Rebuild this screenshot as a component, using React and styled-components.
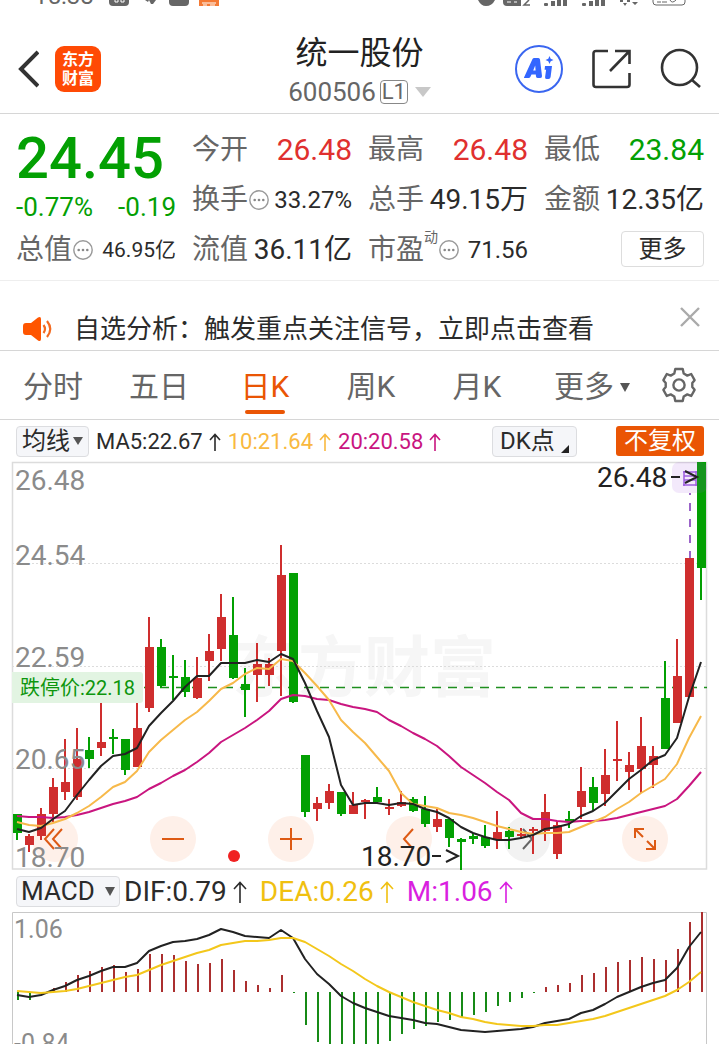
import React from "react";
import styled, { createGlobalStyle } from "styled-components";

const GlobalStyle = createGlobalStyle`
  * { box-sizing: border-box; }
  body {
    margin: 0;
    background: #fff;
    color: #2b2b2b;
    font-family: Roboto, "Noto Sans CJK SC", sans-serif;
  }
  button { font: inherit; color: inherit; background: none; border: 0; padding: 0; margin: 0; cursor: pointer; }
  svg { display: block; flex: none; }
`;

const GREEN = "#03a003";
const RED = "#e0302f";
const ORANGE = "#ea5504";

const Page = styled.div`
  height: 100vh;
  overflow: hidden;
`;

/* ---------- status bar ---------- */
const StatusBar = styled.div`
  height: 24px;
  padding: 0 33px 0 34px;
`;
const StatusClip = styled.div`
  height: 8px;
  overflow: hidden;
  display: flex;
  justify-content: space-between;
  align-items: flex-end;
  color: #666;
`;
const StatusGroup = styled.div`
  display: flex;
  align-items: flex-end;
  gap: ${(p) => p.$gap}px;
  svg { margin-bottom: 2px; }
`;
const Clock = styled.span`
  font-size: 24px;
  line-height: 24px;
  margin-right: 5px;
`;

/* ---------- header ---------- */
const Header = styled.header`
  display: grid;
  grid-template-columns: 1fr auto 1fr;
  align-items: center;
  height: 90px;
  padding: 0 18px 0 18px;
  border-bottom: 1px solid #d6d6d6;
`;
const HeaderSide = styled.div`
  display: flex;
  align-items: center;
  justify-content: ${(p) => (p.$end ? "flex-end" : "flex-start")};
  gap: ${(p) => (p.$end ? 29 : 16)}px;
`;
const IconButton = styled.button`
  display: flex;
  align-items: center;
  justify-content: center;
`;
const BrandLogo = styled.div`
  width: 46px;
  height: 46px;
  border-radius: 9px;
  background: #ff4a05;
  color: #fff;
  font-size: 16px;
  font-weight: 700;
  line-height: 19px;
  padding-top: 4px;
  text-align: center;
`;
const TitleBlock = styled.div`
  display: flex;
  flex-direction: column;
  align-items: center;
  padding-top: 4px;
`;
const Title = styled.h1`
  margin: 0;
  font-size: 32px;
  font-weight: 400;
  line-height: 42px;
  color: #222;
`;
const CodeLine = styled.button`
  display: flex;
  align-items: center;
  font-size: 26px;
  line-height: 36px;
  color: #666;
`;
const LevelTag = styled.span`
  border: 1px solid #888;
  border-radius: 4px;
  width: 28px;
  font-size: 22px;
  line-height: 22px;
  text-align: center;
  margin: 0 7px 0 4px;
`;
const Caret = styled.span`
  border-left: ${(p) => p.$w}px solid transparent;
  border-right: ${(p) => p.$w}px solid transparent;
  border-top: ${(p) => p.$h}px solid ${(p) => p.$c || "#555"};
`;

/* ---------- quote panel ---------- */
const Quote = styled.section`
  display: grid;
  grid-template-columns: repeat(4, 1fr);
  grid-template-rows: 50px 50px 50px;
  column-gap: 16px;
  padding: 10px 15px 6px 16px;
  border-bottom: 1px solid #eee;
`;
const PriceBlock = styled.div`
  grid-row: span 2;
  color: ${GREEN};
`;
const Price = styled.div`
  font-size: 58px;
  font-weight: 500;
  line-height: 64px;
  padding-top: 2px;
`;
const Change = styled.div`
  display: flex;
  justify-content: space-between;
  font-size: 26px;
  line-height: 34px;
`;
const Cell = styled.div`
  display: flex;
  align-items: center;
  justify-content: space-between;
  white-space: nowrap;
  padding-top: 2px;
`;
const CellLabel = styled.span`
  display: flex;
  align-items: center;
  font-size: 28px;
  line-height: 40px;
  color: #666;
`;
const CellValue = styled.span`
  font-size: ${(p) => p.$size || 28}px;
  line-height: 40px;
  color: ${(p) => p.$color || "#2b2b2b"};
`;
const Sup = styled.sup`
  font-size: 14px;
  line-height: 14px;
  align-self: flex-start;
`;
const MoreButton = styled.button`
  justify-self: end;
  align-self: center;
  width: 83px;
  height: 36px;
  border: 1px solid #ddd;
  border-radius: 4px;
  font-size: 24px;
  line-height: 32px;
`;

/* ---------- notice ---------- */
const Notice = styled.section`
  display: flex;
  align-items: center;
  height: 70px;
  padding: 26px 19px 0 22px;
  border-bottom: 1px solid #d6d6d6;
`;
const NoticeText = styled.p`
  flex: 1;
  margin: 0 0 0 20px;
  font-size: 26px;
  line-height: 40px;
  white-space: nowrap;
`;
const CloseButton = styled(IconButton)`
  align-self: flex-start;
`;

/* ---------- tabs ---------- */
const Tabs = styled.nav`
  display: grid;
  grid-template-columns: repeat(5, 106fr) 124fr 50fr;
  height: 69px;
  padding-right: 15px;
  border-bottom: 1px solid #d6d6d6;
`;
const Tab = styled.button`
  position: relative;
  display: flex;
  align-items: center;
  justify-content: center;
  gap: 6px;
  padding-top: 4px;
  font-size: 30px;
  line-height: 40px;
  color: ${(p) => (p.$active ? ORANGE : "#666")};
  &::after {
    content: "";
    display: ${(p) => (p.$active ? "block" : "none")};
    position: absolute;
    left: calc(50% - 20px);
    bottom: 5px;
    width: 40px;
    height: 4px;
    border-radius: 2px;
    background: ${ORANGE};
  }
`;

/* ---------- indicator rows ---------- */
const IndicatorRow = styled.div`
  display: flex;
  align-items: center;
  height: 42px;
  padding: 0 15px 0 16px;
`;
const Chip = styled.button`
  position: relative;
  display: flex;
  align-items: center;
  justify-content: space-between;
  width: ${(p) => p.$w}px;
  height: 31px;
  padding: 0 ${(p) => p.$pad || 5}px;
  border: 1px solid #dcdde0;
  border-radius: 4px;
  background: #f5f6f9;
  font-size: ${(p) => p.$size || 24}px;
  line-height: 28px;
  margin-right: ${(p) => p.$mr}px;
`;
const AdjustButton = styled.button`
  width: 88px;
  height: 30px;
  border-radius: 3px;
  background: ${ORANGE};
  color: #fff;
  font-size: 24px;
  line-height: 28px;
`;
const Corner = styled.span`
  border-left: 8px solid transparent;
  border-bottom: 8px solid #222;
  align-self: flex-end;
  margin-bottom: 3px;
`;
const Readings = styled.div`
  flex: 1;
  display: flex;
  align-items: center;
  gap: ${(p) => p.$gap}px;
  padding-top: 2px;
`;
const Reading = styled.span`
  display: flex;
  align-items: center;
  gap: 6px;
  font-size: ${(p) => p.$size}px;
  line-height: 30px;
  color: ${(p) => p.$color};
`;

/* ---------- charts ---------- */
const ChartBox = styled.section`
  position: relative;
  padding: 0 12px;
  svg.plot {
    position: relative;
    z-index: 1;
    width: 100%;
    height: auto;
    overflow: visible;
    pointer-events: none;
  }
`;
const ChartTools = styled.div`
  position: absolute;
  left: 32px;
  right: 51px;
  bottom: 8px;
  display: flex;
  justify-content: space-between;
`;
const ToolButton = styled.button`
  display: flex;
  align-items: center;
  justify-content: center;
  width: 46px;
  height: 46px;
  border-radius: 50%;
  color: ${(p) => (p.$muted ? "#666" : "#dd5a14")};
  background: ${(p) => (p.$muted ? "#f2f2f2" : "#fef0e9")};
`;

/* direction, wick top, body top, body bottom, wick bottom */
const CANDLES = [
  ["g",814,814,833,840],["r",834,836,845,852],["r",808,814,836,840],["r",778,787,814,822],
  ["r",739,782,792,800],["r",728,759,797,800],["g",737,750,759,768],["r",697,742,748,756],
  ["g",729,737,739,754],["g",739,739,770,775],["r",698,728,767,767],["r",617,647,708,712],
  ["g",639,647,686,688],["g",655,676,678,700],["g",660,677,692,697],["r",657,678,698,699],
  ["r",634,651,661,681],["r",594,617,649,661],["g",597,635,678,679],["g",668,684,690,717],
  ["r",643,664,675,702],["r",658,664,675,686],["r",545,575,651,696],["g",573,573,702,703],
  ["g",755,755,812,817],["r",797,803,809,821],["r",784,791,803,809],["g",792,792,814,816],
  ["r",792,805,814,814],["r",799,800,802,819],["g",787,797,802,804],["r",799,807,809,815],
  ["r",791,802,806,807],["g",797,799,811,812],["g",796,809,824,827],["r",809,819,827,832],
  ["g",819,819,838,847],["g",838,839,842,870],["g",833,836,839,844],["g",825,837,846,848],
  ["r",811,832,839,849],["g",827,831,837,849],["r",828,834,836,839],["r",827,829,831,854],
  ["r",794,812,831,841],["r",822,825,854,859],["g",811,819,821,828],["r",767,791,807,819],
  ["g",777,787,803,811],["r",749,775,794,806],["r",721,759,761,781],["r",752,765,772,790],
  ["r",717,746,769,793],["r",746,756,765,788],["g",661,698,749,749],["r",639,676,723,723],
  ["r",558,558,697,697],["g",462,462,568,600],
];
const MA5 = [829,832,828,819,811,795,780,766,756,754,748,726,713,701,687,676,676,663,663,663,660,662,654,659,683,711,737,785,805,803,803,805,803,804,809,812,818,827,833,837,840,840,838,835,829,827,824,816,811,803,791,779,770,760,755,738,697,662];
const MA10 = [822,825,826,823,819,813,806,797,787,782,771,752,740,730,720,712,701,689,683,674,668,669,659,661,673,686,700,720,732,743,757,771,793,804,806,808,813,815,818,822,826,829,832,834,833,833,832,827,822,817,809,802,793,786,779,764,738,716];
const MA20 = [816,817,817,818,817,815,812,808,804,801,797,789,783,776,770,762,753,742,735,728,720,711,699,695,696,699,700,704,707,709,712,720,726,733,739,746,756,767,775,783,792,800,813,819,819,821,822,821,821,820,818,815,812,809,806,799,786,772];
const MACD = [1000,1000,995,988,982,975,971,967,965,972,969,954,954,955,961,964,963,959,970,981,985,988,975,993,1025,1042,1050,1054,1055,1052,1047,1041,1034,1029,1026,1022,1020,1018,1015,1012,1006,1002,998,993,987,985,983,975,973,967,962,960,957,959,960,949,922,912];
const DIF = [995,997,995,990,986,980,976,971,967,967,963,951,946,942,941,939,935,929,932,936,937,938,930,938,959,974,984,996,1003,1008,1012,1016,1018,1020,1023,1024,1027,1030,1031,1032,1031,1030,1029,1027,1023,1021,1019,1013,1010,1004,997,992,987,983,980,968,947,932];
const DEA = [991,992,993,992,991,989,986,983,980,977,975,970,965,961,957,953,950,945,943,941,941,940,938,938,942,949,956,964,971,979,986,992,997,1002,1006,1010,1013,1017,1019,1022,1024,1025,1026,1026,1025,1025,1023,1021,1019,1016,1012,1008,1004,1000,996,990,982,972];

const xAt = (i) => 17 + 12 * i;
const toPoints = (ys) => ys.map((y, i) => `${xAt(i)},${y}`).join(" ");

const Line = ({ ys, color }) => (
  <polyline points={toPoints(ys)} fill="none" stroke={color} strokeWidth="2" strokeLinejoin="round" />
);

const Candle = ({ i, data: [kind, hi, top, bottom, lo] }) => {
  const fill = kind === "g" ? "#03a003" : "#cf2e2e";
  const x = xAt(i);
  return (
    <g fill={fill}>
      <rect x={x - 1} y={hi} width="2" height={lo - hi} />
      <rect x={x - 4} y={top} width="9" height={Math.max(2, bottom - top)} />
    </g>
  );
};

const UpArrow = ({ w = 12, h = 18 }) => (
  <svg width={w} height={h} viewBox={`0 0 ${w} ${h}`} fill="none" stroke="currentColor" strokeWidth="1.6" role="img" aria-label="上升">
    <path d={`M${w / 2} ${h}V1M1 ${w / 2 + 1}L${w / 2} 1.5L${w - 1} ${w / 2 + 1}`} />
  </svg>
);

const InfoDots = () => (
  <svg width="22" height="20" viewBox="0 0 22 20" aria-hidden="true">
    <circle cx="11" cy="10" r="9.200" fill="none" stroke="#999" strokeWidth="1.400" />
    <g fill="#888">
      <circle cx="6.700" cy="10" r="1.300" />
      <circle cx="11" cy="10" r="1.300" />
      <circle cx="15.300" cy="10" r="1.300" />
    </g>
  </svg>
);

const Gear = () => (
  <svg width="36" height="36" viewBox="0 0 36 36" fill="none" stroke="#666" strokeWidth="2.4" strokeLinejoin="round">
    <path d="M14.300 2H21.700L22.700 6.500L26.300 8.600L30.200 7L33.600 13.200L31.300 16V20L33.600 22.800L30.200 29L26.300 27.400L22.700 29.500L21.700 34H14.300L13.300 29.500L9.700 27.400L5.800 29L2.400 22.800L4.700 20V16L2.400 13.200L5.800 7L9.700 8.600L13.300 6.500Z" />
    <circle cx="18" cy="18" r="5.600" />
  </svg>
);

const Signal = () => (
  <svg width="24" height="6" fill="#666">
    <rect x="0" y="3" width="4" height="3" rx="1" />
    <rect x="7" y="1" width="4" height="5" />
    <rect x="13" y="0" width="4" height="6" />
    <rect x="19" y="0" width="4" height="6" />
  </svg>
);

const Stat = ({ label, value, size, color, info, sup }) => (
  <Cell>
    <CellLabel>
      {label}
      {sup && <Sup>{sup}</Sup>}
      {info && <InfoDots />}
    </CellLabel>
    <CellValue $size={size} $color={color}>{value}</CellValue>
  </Cell>
);

const TOOLS = [
  ["最早", <path key="p" d="M13 4L4 14L13 24M21 4L12 14L21 24" />],
  ["缩小", <path key="p" d="M3 14H25" />],
  ["放大", <path key="p" d="M3 14H25M14 3V25" />],
  ["左移", <path key="p" d="M18 4L9 14L18 24" />],
  ["右移", <path key="p" d="M10 4L19 14L10 24" />],
  ["全屏", <path key="p" d="M4 13V4H13M4 4L12 12M24 15V24H15M24 24L16 16" />],
];

export default function App() {
  return (
    <Page>
      <GlobalStyle />
      <StatusBar>
        <StatusClip>
          <StatusGroup $gap={10}>
            <Clock>15:38</Clock>
            <svg width="20" height="6"><path d="M0 0H20V2Q20 6 16 6H4Q0 6 0 2Z" fill="#666" /><path d="M6 0V2H9V0M12 0V2H15V0" stroke="#fff" fill="none" /></svg>
            <svg width="20" height="6" fill="#666"><path d="M6 0H10L9 2ZM10 0H17L14 4H12Z" /></svg>
            <svg width="20" height="6"><path d="M0 0H20V2Q20 6 16 6H4Q0 6 0 2Z" fill="#666" /></svg>
            <svg width="20" height="6"><rect width="20" height="6" fill="#f47a35" /><path d="M3 3H17M4 5H8M11 5H16" stroke="#fff" fill="none" /></svg>
          </StatusGroup>
          <StatusGroup $gap={14}>
            <svg width="52" height="6" fill="#666"><path d="M0 0H17Q14 6 8 6Q3 6 0 0ZM25 0H43V6H29Q25 6 25 2Z" /><path d="M29 2H33M36 2H39" stroke="#fff" /><path d="M51 0L46 5H52" stroke="#666" strokeWidth="1.500" fill="none" /></svg>
            <Signal />
            <Signal />
            <svg width="18" height="6" fill="#666"><path d="M0 0H3V2H0ZM7 0H10V2H7ZM3 3H7L5 6ZM12 2H18L15 5Z" /></svg>
            <svg width="34" height="6" fill="none" stroke="#666"><path d="M1 0V2Q1 5 4 5H30Q33 5 33 2V0M5 2H9M10 2H15M18 0Q20 4 24 0" /></svg>
          </StatusGroup>
        </StatusClip>
      </StatusBar>

      <Header>
        <HeaderSide>
          <IconButton aria-label="返回">
            <svg width="21" height="38" viewBox="0 0 21 38" fill="none" stroke="#333" strokeWidth="4"><path d="M20 2L3 19L20 36" /></svg>
          </IconButton>
          <BrandLogo>东方<br />财富</BrandLogo>
        </HeaderSide>
        <TitleBlock>
          <Title>统一股份</Title>
          <CodeLine>
            600506<LevelTag>L1</LevelTag><Caret $w={8} $h={10} $c="#c8c8c8" />
          </CodeLine>
        </TitleBlock>
        <HeaderSide $end>
          <IconButton aria-label="Ai">
            <svg width="48" height="48" viewBox="0 0 48 48">
              <circle cx="24" cy="24" r="23" fill="none" stroke="#3a66f0" strokeWidth="2" />
              <path fill="#3366ff" fillRule="evenodd" d="M9 32.500L17.500 14Q18 13 19.300 13H23.400Q24.800 13 25 14.500L27 31Q27.200 33 25.200 33H23Q21.200 33 21 31.400L20.800 29.500H16.500L15.300 32Q14.800 33 13.600 33H10Q8.600 33 9 32.500ZM18.200 25.500H20.600L20.200 20.500Z" />
              <path fill="#3366ff" d="M30 21H37L35.600 32Q35.300 34 33.500 34H31.500Q29.800 34 30.100 32L31.100 24.800H29.600ZM34.500 11L35.700 13.800L38.500 15L35.700 16.200L34.500 19L33.300 16.200L30.500 15L33.300 13.800Z" />
            </svg>
          </IconButton>
          <IconButton aria-label="分享">
            <svg width="39" height="40" viewBox="0 0 39 40" fill="none" stroke="#333" strokeWidth="2.600">
              <path d="M16 2H4Q1.500 2 1.500 4.500V35.500Q1.500 38 4 38H35Q37.500 38 37.500 35.500V24M23 2H37.500V15M37 2.500L18 22" />
            </svg>
          </IconButton>
          <IconButton aria-label="搜索">
            <svg width="41" height="41" viewBox="0 0 41 41" fill="none" stroke="#333" strokeWidth="2.600">
              <circle cx="19.500" cy="19.500" r="17.500" /><path d="M32 32L40 39" />
            </svg>
          </IconButton>
        </HeaderSide>
      </Header>

      <Quote>
        <PriceBlock>
          <Price>24.45</Price>
          <Change><span>-0.77%</span><span>-0.19</span></Change>
        </PriceBlock>
        <Stat label="今开" value="26.48" size={30} color={RED} />
        <Stat label="最高" value="26.48" size={30} color={RED} />
        <Stat label="最低" value="23.84" size={30} color={GREEN} />
        <Stat label="换手" value="33.27%" size={24} info />
        <Stat label="总手" value="49.15万" />
        <Stat label="金额" value="12.35亿" />
        <Stat label="总值" value="46.95亿" size={21} info />
        <Stat label="流值" value="36.11亿" />
        <Stat label="市盈" value="71.56" size={24} sup="动" info />
        <MoreButton>更多</MoreButton>
      </Quote>

      <Notice>
        <svg width="32" height="26" viewBox="0 0 32 26" aria-hidden="true">
          <path d="M4 7H9L16 1.500Q19 0 19 3V23Q19 26 16 24.500L9 19H4Q1 19 1 16V10Q1 7 4 7Z" fill="#ff5500" />
          <path d="M21.500 9Q24.500 13 21.500 17M25 5Q31.500 13 25 21" fill="none" stroke="#f36a20" strokeWidth="2.200" />
        </svg>
        <NoticeText>自选分析：触发重点关注信号，立即点击查看</NoticeText>
        <CloseButton aria-label="关闭">
          <svg width="20" height="20" viewBox="0 0 20 20" stroke="#aaa" strokeWidth="2.400"><path d="M1 1L19 19M19 1L1 19" /></svg>
        </CloseButton>
      </Notice>

      <Tabs>
        <Tab>分时</Tab>
        <Tab>五日</Tab>
        <Tab $active aria-current="page">日K</Tab>
        <Tab>周K</Tab>
        <Tab>月K</Tab>
        <Tab>更多<Caret $w={5} $h={9} /></Tab>
        <IconButton aria-label="设置"><Gear /></IconButton>
      </Tabs>

      <IndicatorRow>
        <Chip $w={73} $mr={7}>均线<Caret $w={5} $h={8} /></Chip>
        <Readings $gap={7}>
          <Reading $size={22} $color="#2b2b2b">MA5:22.67<UpArrow /></Reading>
          <Reading $size={22} $color="#f9b93f">10:21.64<UpArrow /></Reading>
          <Reading $size={22} $color="#c9157f">20:20.58<UpArrow /></Reading>
        </Readings>
        <Chip $w={85} $pad={7} $mr={39}>DK点<Corner /></Chip>
        <AdjustButton>不复权</AdjustButton>
      </IndicatorRow>

      <ChartBox>
        <ChartTools>
          {TOOLS.map(([label, icon], i) => (
            <ToolButton key={label} aria-label={label} $muted={i === 4}>
              <svg width="28" height="28" viewBox="0 0 28 28" fill="none" stroke="currentColor" strokeWidth="2">{icon}</svg>
            </ToolButton>
          ))}
        </ChartTools>
        <svg className="plot" viewBox="12 462 695 408" role="img" aria-label="日K线图">
          <text x="232" y="691" fontSize="66" fontWeight="700" fill="#f6f6f6">东方财富</text>
          <g stroke="#dcdcdc" strokeDasharray="2 2">
            <path d="M12 563.500H707M12 666.500H707M12 768.500H707" />
          </g>
          <path d="M12.500 869V462.500H706.500V869Z" fill="none" stroke="#dcdcdc" strokeWidth="1.500" />
          <path d="M144 687.500H707" stroke="#1f8f1f" strokeWidth="1.300" strokeDasharray="9 7" />
          {CANDLES.map((c, i) => <Candle key={i} i={i} data={c} />)}
          <Line ys={MA20} color="#c9157f" />
          <Line ys={MA10} color="#f7b94a" />
          <Line ys={MA5} color="#222" />
          <path d="M12 672H140Q143 672 143 675V700Q143 703 140 703H12Z" fill="#e2f4e2" />
          <text x="20" y="695" fontSize="20" fill="#0d960d">跌停价:22.18</text>
          <g fontSize="28" fill="#8b8b8b">
            <text x="15" y="490">26.48</text>
            <text x="15" y="565">24.54</text>
            <text x="15" y="667">22.59</text>
            <text x="15" y="769">20.65</text>
            <text x="15" y="867">18.70</text>
          </g>
          <path d="M690 493V558" stroke="#9b63c9" strokeWidth="2" strokeDasharray="8 8" strokeDashoffset="6" />
          <rect x="672" y="462" width="35" height="31" rx="7" fill="#9a4be0" fillOpacity="0.12" />
          <path d="M684 471V486M696 471V486M683 472H697M684 476H696M684 480H696M683 485H697" stroke="#9d5ee0" strokeWidth="1.500" fill="none" />
          <g fontSize="28" fill="#222">
            <text x="597" y="487">26.48</text>
            <text x="361" y="866">18.70</text>
          </g>
          <g fill="none" stroke="#222" strokeWidth="2">
            <path d="M671 477H680M685 471L697 477L685 483" />
            <path d="M432 856H441M446 850L458 856L446 862" />
          </g>
          <circle cx="234" cy="856" r="6" fill="#f02222" />
        </svg>
      </ChartBox>

      <IndicatorRow>
        <Chip $w={104} $pad={4} $size={26} $mr={4}>MACD<Caret $w={5} $h={9} /></Chip>
        <Readings $gap={13}>
          <Reading $size={28} $color="#2b2b2b">DIF:0.79<UpArrow w={14} h={22} /></Reading>
          <Reading $size={28} $color="#f0c010">DEA:0.26<UpArrow w={14} h={22} /></Reading>
          <Reading $size={28} $color="#d91fe0">M:1.06<UpArrow w={14} h={22} /></Reading>
        </Readings>
      </IndicatorRow>

      <ChartBox>
        <svg className="plot" viewBox="12 912 695 160" role="img" aria-label="MACD">
          <path d="M12.500 1071V912.500H706.500V1071Z" fill="none" stroke="#c8c8c8" />
          {MACD.map((y, i) => (
            <rect
              key={i}
              x={xAt(i)}
              y={Math.min(992, y)}
              width="2"
              height={Math.abs(y - 992)}
              fill={y < 992 ? "#ab2f2f" : "#168a16"}
            />
          ))}
          <Line ys={DIF} color="#222" />
          <Line ys={DEA} color="#f3c71b" />
          <g fontSize="25" fill="#8b8b8b">
            <text x="14" y="938">1.06</text>
            <text x="14" y="1052">-0.84</text>
          </g>
        </svg>
      </ChartBox>
    </Page>
  );
}
